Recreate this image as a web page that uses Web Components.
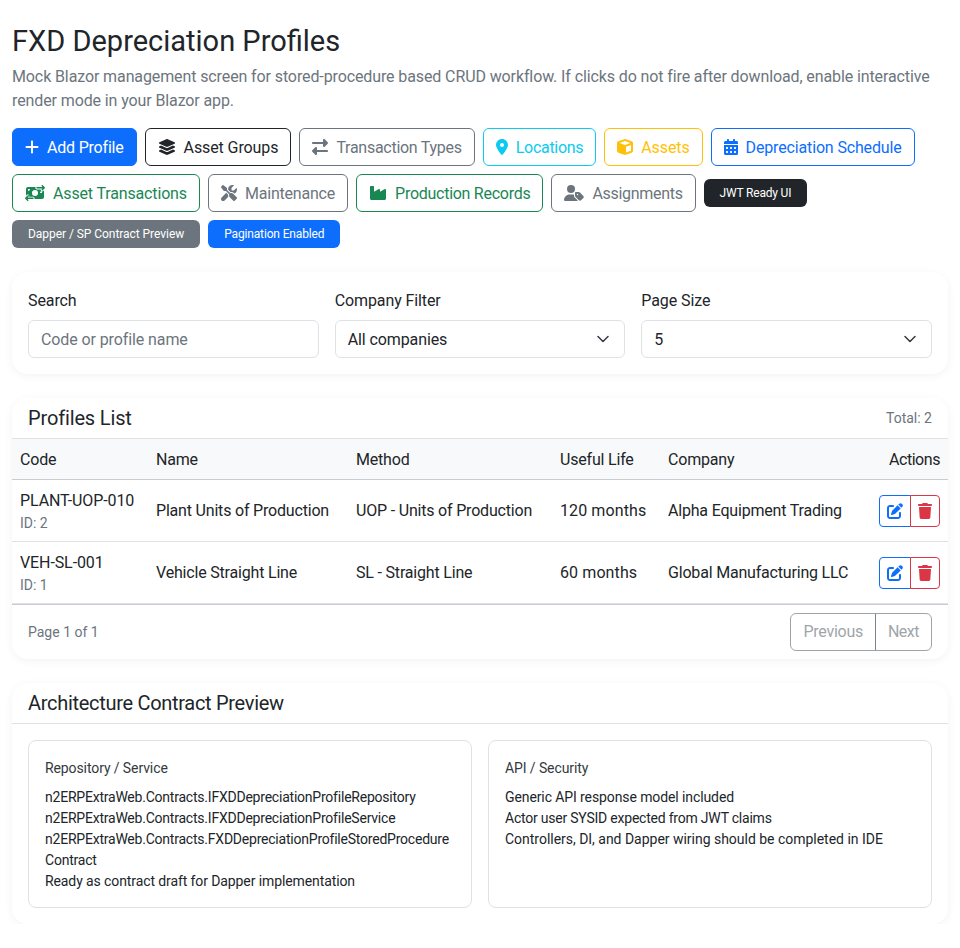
<!DOCTYPE html>
<html><head><meta charset="utf-8"><style>
html,body{margin:0;padding:0;background:#fff}
body{font:16px/24px Roboto,"Liberation Sans",sans-serif;letter-spacing:-.1px;color:#212529}
</style></head><body>
<fxd-app></fxd-app>
<script>
const I={
plus:['0 0 448 512','M256 80c0-17.7-14.3-32-32-32s-32 14.3-32 32V224H48c-17.7 0-32 14.3-32 32s14.3 32 32 32H192V432c0 17.7 14.3 32 32 32s32-14.3 32-32V288H400c17.7 0 32-14.3 32-32s-14.3-32-32-32H256V80z'],
layers:['0 0 576 512','M264.5 5.2c14.9-6.9 32.1-6.9 47 0l218.6 101c8.5 3.9 13.9 12.4 13.9 21.8s-5.4 17.9-13.9 21.8l-218.6 101c-14.9 6.9-32.1 6.9-47 0L45.9 149.8C37.4 145.8 32 137.3 32 128s5.4-17.9 13.9-21.8L264.5 5.2zM476.9 209.6l53.2 24.6c8.5 3.9 13.9 12.4 13.9 21.8s-5.4 17.9-13.9 21.8l-218.6 101c-14.9 6.9-32.1 6.9-47 0L45.9 277.8C37.4 273.8 32 265.3 32 256s5.4-17.9 13.9-21.8l53.2-24.6 152 70.2c23.4 10.8 50.4 10.8 73.8 0l152-70.2zm-152 198.2l152-70.2 53.2 24.6c8.5 3.9 13.9 12.4 13.9 21.8s-5.4 17.9-13.9 21.8l-218.6 101c-14.9 6.9-32.1 6.9-47 0L45.9 405.8C37.4 401.8 32 393.3 32 384s5.4-17.9 13.9-21.8l53.2-24.6 152 70.2c23.4 10.8 50.4 10.8 73.8 0z'],
swap:['0 0 512 512','M32 96l320 0V32c0-12.9 7.8-24.6 19.8-29.6s25.7-2.2 34.9 6.9l96 96c6 6 9.4 14.1 9.4 22.6s-3.4 16.6-9.4 22.6l-96 96c-9.2 9.2-22.9 11.9-34.9 6.9s-19.8-16.6-19.8-29.6V160L32 160c-17.7 0-32-14.3-32-32s14.3-32 32-32zM480 352c17.7 0 32 14.3 32 32s-14.3 32-32 32H160v64c0 12.9-7.8 24.6-19.8 29.6s-25.7 2.2-34.9-6.9l-96-96c-6-6-9.4-14.1-9.4-22.6s3.4-16.6 9.4-22.6l96-96c9.2-9.2 22.9-11.9 34.9-6.9s19.8 16.6 19.8 29.6l0 64H480z'],
pin:['0 0 384 512','M215.7 499.2C267 435 384 279.4 384 192C384 86 298 0 192 0S0 86 0 192c0 87.4 117 243 168.3 307.2c12.3 15.3 35.1 15.3 47.4 0zM192 128a64 64 0 1 1 0 128 64 64 0 1 1 0-128z'],
cube:['0 0 512 512','M234.5 5.7c13.9-5 29.1-5 43.1 0l192 68.6C495 83.4 512 107.5 512 134.6V377.4c0 27-17 51.2-42.5 60.3l-192 68.6c-13.9 5-29.1 5-43.1 0l-192-68.6C17 428.6 0 404.5 0 377.4V134.6c0-27 17-51.2 42.5-60.3l192-68.6zM256 66L82.3 128 256 190l173.7-62L256 66zm32 368.6l160-57.1v-188L288 246.6v188z'],
cal:['0 0 448 512','M128 0c17.7 0 32 14.3 32 32V64H288V32c0-17.7 14.3-32 32-32s32 14.3 32 32V64h48c26.5 0 48 21.5 48 48v48H0V112C0 85.5 21.5 64 48 64H96V32c0-17.7 14.3-32 32-32zM0 192H448V464c0 26.5-21.5 48-48 48H48c-26.5 0-48-21.5-48-48V192zm64 80v32c0 8.8 7.2 16 16 16h32c8.8 0 16-7.2 16-16V272c0-8.8-7.2-16-16-16H80c-8.8 0-16 7.2-16 16zm128 0v32c0 8.8 7.2 16 16 16h32c8.8 0 16-7.2 16-16V272c0-8.8-7.2-16-16-16H208c-8.8 0-16 7.2-16 16zm144-16c-8.8 0-16 7.2-16 16v32c0 8.8 7.2 16 16 16h32c8.8 0 16-7.2 16-16V272c0-8.8-7.2-16-16-16H336zM64 400v32c0 8.8 7.2 16 16 16h32c8.8 0 16-7.2 16-16V400c0-8.8-7.2-16-16-16H80c-8.8 0-16 7.2-16 16zm144-16c-8.8 0-16 7.2-16 16v32c0 8.8 7.2 16 16 16h32c8.8 0 16-7.2 16-16V400c0-8.8-7.2-16-16-16H208zm112 16v32c0 8.8 7.2 16 16 16h32c8.8 0 16-7.2 16-16V400c0-8.8-7.2-16-16-16H336c-8.8 0-16 7.2-16 16z'],
money:['0 0 640 512','M535 41c-9.4-9.4-9.4-24.6 0-33.9s24.6-9.4 33.9 0l64 64c4.5 4.5 7 10.6 7 17s-2.5 12.5-7 17l-64 64c-9.4 9.4-24.6 9.4-33.9 0s-9.4-24.6 0-33.9l23-23L384 112c-13.3 0-24-10.7-24-24s10.7-24 24-24l174.1 0L535 41zM105 377l-23 23L256 400c13.3 0 24 10.7 24 24s-10.7 24-24 24L81.9 448l23 23c9.4 9.4 9.4 24.6 0 33.9s-24.6 9.4-33.9 0L7 441c-4.5-4.5-7-10.6-7-17s2.5-12.5 7-17l64-64c9.4-9.4 24.6-9.4 33.9 0s9.4 24.6 0 33.9zM96 64H337.9c-3.7 7.2-5.9 15.3-5.9 24c0 28.7 23.3 52 52 52l117.4 0c-4 17 .6 35.5 13.8 48.8c20.3 20.3 53.2 20.3 73.5 0L608 169.5V384c0 35.3-28.7 64-64 64H302.1c3.7-7.2 5.9-15.3 5.9-24c0-28.7-23.3-52-52-52l-117.4 0c4-17-.6-35.5-13.8-48.8c-20.3-20.3-53.2-20.3-73.5 0L32 342.5V128c0-35.3 28.7-64 64-64zm64 64H96v64c35.3 0 64-28.7 64-64zM96 320v64h64c0-35.3-28.7-64-64-64zM544 192c-35.3 0-64 28.7-64 64h64V192zM320 352a96 96 0 1 0 0-192 96 96 0 1 0 0 192z'],
tools:['0 0 512 512','M78.6 5C69.1-2.4 55.6-1.5 47 7L7 47c-8.5 8.5-9.4 22-2.1 31.6l80 104c4.5 5.9 11.6 9.4 19 9.4h54.1l109 109c-14.7 29-10 65.4 14.3 89.6l112 112c12.5 12.5 32.8 12.5 45.3 0l64-64c12.5-12.5 12.5-32.8 0-45.3l-112-112c-24.2-24.2-60.6-29-89.6-14.3l-109-109V104c0-7.5-3.5-14.5-9.4-19L78.6 5zM19.9 396.1C7.2 408.8 0 426.1 0 444.1C0 481.6 30.4 512 67.9 512c18 0 35.3-7.2 48-19.9L233.7 374.3c-7.8-20.9-9-43.6-3.6-65.1l-61.7-61.7L19.9 396.1zM512 144c0-10.5-1.1-20.7-3.2-30.5c-2.4-11.2-16.1-14.1-24.2-6l-63.9 63.9c-3 3-7.1 4.7-11.3 4.7H352c-8.8 0-16-7.2-16-16V102.6c0-4.2 1.7-8.3 4.7-11.3l63.9-63.9c8.1-8.1 5.2-21.8-6-24.2C388.7 1.1 378.5 0 368 0C288.5 0 224 64.5 224 144l0 .8 85.3 85.3c36-9.1 75.8 .5 104 28.7L429 274.5c49-23 83-72.8 83-130.5z'],
factory:['0 0 576 512','M64 32C46.3 32 32 46.3 32 64V304v48 80c0 26.5 21.5 48 48 48H496c26.5 0 48-21.5 48-48V304 152.2c0-18.2-19.4-29.7-35.4-21.1L352 215.4V152.2c0-18.2-19.4-29.7-35.4-21.1L160 215.4V64c0-17.7-14.3-32-32-32H64z'],
usertag:['0 0 640 512','M224 256A128 128 0 1 0 224 0a128 128 0 1 0 0 256zm-45.7 48C79.8 304 0 383.8 0 482.3C0 498.7 13.3 512 29.7 512H418.3c10 0 18.8-4.9 24.2-12.5l-99.2-99.2c-14.9-14.9-23.3-35.1-23.3-56.1v-33c-15.9-4.7-32.8-7.2-50.3-7.2H178.3zM384 224c-17.7 0-32 14.3-32 32v82.7c0 17 6.7 33.3 18.7 45.3L478 491.3c18.7 18.7 49.1 18.7 67.9 0l73.4-73.4c18.7-18.7 18.7-49.1 0-67.9L512 242.7c-12-12-28.3-18.7-45.3-18.7H384zm24 80a24 24 0 1 1 48 0 24 24 0 1 1 -48 0z'],
edit:['0 0 512 512','M471.6 21.7c-21.9-21.9-57.3-21.9-79.2 0L362.3 51.7l97.9 97.9 30.1-30.1c21.9-21.9 21.9-57.3 0-79.2L471.6 21.7zm-299.2 220c-6.1 6.1-10.8 13.6-13.5 21.9l-29.6 88.8c-2.9 8.6-.6 18.1 5.8 24.6s15.9 8.7 24.6 5.8l88.8-29.6c8.2-2.7 15.7-7.4 21.9-13.5L437.7 172.3 339.7 74.3 172.4 241.7zM96 64C43 64 0 107 0 160V416c0 53 43 96 96 96H352c53 0 96-43 96-96V320c0-17.7-14.3-32-32-32s-32 14.3-32 32v96c0 17.7-14.3 32-32 32H96c-17.7 0-32-14.3-32-32V160c0-17.7 14.3-32 32-32h96c17.7 0 32-14.3 32-32s-14.3-32-32-32H96z'],
trash:['0 0 448 512','M135.2 17.7L128 32H32C14.3 32 0 46.3 0 64S14.3 96 32 96H416c17.7 0 32-14.3 32-32s-14.3-32-32-32H320l-7.2-14.3C307.4 6.8 296.3 0 284.2 0H163.8c-12.1 0-23.2 6.8-28.6 17.7zM416 128H32L53.2 467c1.6 25.3 22.6 45 47.9 45H346.9c25.3 0 46.3-19.7 47.9-45L416 128z']
};
class FxdIcon extends HTMLElement{connectedCallback(){
 const[v,d]=I[this.getAttribute('name')];const[,,w,h]=v.split(' ').map(Number);
 this.attachShadow({mode:'open'}).innerHTML=`<style>:host{display:inline-flex;align-items:center}svg{height:16px;width:${16*w/h}px;display:block;fill:currentColor}</style><svg viewBox="${v}" aria-hidden="true"><path d="${d}"/></svg>`;
}}
const C={primary:'13,110,253',dark:'33,37,41',secondary:'108,117,125',info:'13,202,240',warning:'255,193,7',success:'25,135,84',danger:'220,53,69'};
class FxdBtn extends HTMLElement{connectedCallback(){
 const c=`rgb(${C[this.getAttribute('color')]})`,fill=this.hasAttribute('fill'),ic=this.getAttribute('icon');
 this.attachShadow({mode:'open'}).innerHTML=`<style>:host{display:inline-flex;align-items:center;gap:8px;height:38px;box-sizing:border-box;padding:0 12px;border:1px solid ${c};border-radius:6px;color:${fill?'#fff':c};background:${fill?c:'#fff'};white-space:nowrap;letter-spacing:${this.getAttribute('ls')||-.1}px}
 span{margin-top:2px}</style>${ic?`<fxd-icon name="${ic}"></fxd-icon>`:''}<span><slot></slot></span>`;
}}
class FxdBadge extends HTMLElement{connectedCallback(){
 this.attachShadow({mode:'open'}).innerHTML=`<style>:host{display:inline-flex;align-items:center;height:28px;box-sizing:border-box;padding:0 16px;border-radius:6px;font-size:12px;line-height:12px;letter-spacing:${this.getAttribute('ls')||-.05}px;color:#fff;background:rgb(${C[this.getAttribute('color')]});white-space:nowrap}</style><slot></slot>`;
}}
class FxdCard extends HTMLElement{connectedCallback(){
 this.attachShadow({mode:'open'}).innerHTML=`<style>:host{display:block;background:#fff;border-radius:16px;box-shadow:0 2px 10px rgba(0,0,0,.05)}</style><slot></slot>`;
}}
class FxdField extends HTMLElement{connectedCallback(){
 const sel=this.hasAttribute('select');
 this.attachShadow({mode:'open'}).innerHTML=`<style>:host{display:block;flex:1 1 0;min-width:0}
 label{display:block;padding-top:1px;margin-bottom:7px}
 .c{height:38px;box-sizing:border-box;border:1px solid #dee2e6;border-radius:6px;padding:2px 12px 0;display:flex;align-items:center;justify-content:space-between;color:${sel?'#212529':'#6c757d'};background:#fff}
 svg{width:12px;height:8px;margin:-2px 3px 0 0;flex:none}</style>
 <label>${this.getAttribute('label')}</label><div class="c"><span>${this.getAttribute('value')}</span>${sel?'<svg viewBox="0 0 12 8"><path fill="none" stroke="#343a40" stroke-linecap="round" stroke-linejoin="round" stroke-width="1.5" d="M1 1.5l5 5 5-5"/></svg>':''}</div>`;
}}
class FxdProfiles extends HTMLElement{connectedCallback(){
 const rows=[['PLANT-UOP-010','ID: 2','Plant Units of Production','UOP - Units of Production','120 months','Alpha Equipment Trading'],['VEH-SL-001','ID: 1','Vehicle Straight Line','SL - Straight Line','60 months','Global Manufacturing LLC']];
 this.attachShadow({mode:'open'}).innerHTML=`<style>:host{display:block}
 .h{display:flex;justify-content:space-between;align-items:center;height:40px;padding:0 16px}
 .t{font-size:20px;line-height:24px;letter-spacing:-.15px}
 .s{font-size:14px;color:#6c757d;letter-spacing:0}
 .grid{display:grid;grid-template-columns:136px 200px 204px 108px 1fr 85px;letter-spacing:-.19px}
 .grid>div{padding:0 8px;display:flex;flex-direction:column;justify-content:center;border-bottom:1px solid #dee2e6;min-width:0;white-space:nowrap}
 .grid>.th{height:42px;box-sizing:border-box;background:#f8f9fa;border-top:1px solid #dee2e6;border-bottom:1px solid #c9cdd1;padding-top:2px}
 .grid>.td{height:62px;box-sizing:border-box}
 .grid>.first{padding-top:2px;letter-spacing:-.1px}
 .sm{font-size:14px;line-height:21px;color:#6c757d;letter-spacing:0}
 .m{letter-spacing:.1px}
 .grid>.r{align-items:flex-end;letter-spacing:-.45px}
 .grid>.acts{flex-direction:row;align-items:center;justify-content:flex-end}
 .ab{height:32px;box-sizing:border-box;border:1px solid;display:flex;align-items:center;justify-content:center;background:#fff}
 .e{width:32px;color:#0d6efd;border-color:#0d6efd;border-radius:4px 0 0 4px}
 .d{width:30px;color:#dc3545;border-color:#dc3545;border-radius:0 4px 4px 0;margin-left:-1px}
 .f{display:flex;justify-content:space-between;align-items:center;padding:8px 16px;border-top:1px solid #c9cdd1}
 .pg{display:flex}
 .pg div{height:38px;box-sizing:border-box;padding:0 12px;border:1px solid #6c757d;display:flex;align-items:center;color:#6c757d;opacity:.65;letter-spacing:-.27px}
 .pg div:first-child{border-radius:6px 0 0 6px}.pg div:last-child{border-radius:0 6px 6px 0;margin-left:-1px;letter-spacing:-.5px}
 </style>
 <div class="h"><div class="t">Profiles List</div><div class="s">Total: 2</div></div>
 <div class="grid">
 ${['Code','Name','Method','Useful Life','Company'].map(x=>`<div class="th">${x}</div>`).join('')}<div class="th r">Actions</div>
 ${rows.map(r=>`<div class="td first"><div>${r[0]}</div><div class="sm">${r[1]}</div></div>${r.slice(2).map(x=>`<div class="td${/months/.test(x)?' m':''}">${x}</div>`).join('')}<div class="td acts"><span class="ab e"><fxd-icon name="edit"></fxd-icon></span><span class="ab d"><fxd-icon name="trash"></fxd-icon></span></div>`).join('')}
 </div>
 <div class="f"><div class="s">Page 1 of 1</div><div class="pg"><div>Previous</div><div>Next</div></div></div>`;
}}
class FxdNote extends HTMLElement{connectedCallback(){
 this.attachShadow({mode:'open'}).innerHTML=`<style>:host{display:block;flex:1 1 0;min-width:0;border:1px solid #dee2e6;border-radius:8px;padding:17px 16px 15px;font-size:14px;line-height:21px}
 .t{margin-bottom:8px;color:#343a40}</style><div class="t">${this.getAttribute('title')}</div><slot></slot>`;
}}
class FxdApp extends HTMLElement{connectedCallback(){
 this.attachShadow({mode:'open'}).innerHTML=`<style>:host{display:block;padding:24px 12px 0}
 h1{font-size:29px;line-height:34px;font-weight:400;letter-spacing:0;margin:0 0 7px}
 p{margin:0 0 15px;color:#6c757d;letter-spacing:-.11px}
 .btns{display:flex;flex-wrap:wrap;align-items:center;gap:8px;margin-bottom:24px}
 .flt{display:flex;gap:16px;padding:16px;margin-bottom:24px}
 .list{margin-bottom:24px}
 .arch-h{font-size:20px;line-height:24px;padding:8px 16px;border-bottom:1px solid #dee2e6;letter-spacing:-.3px}
 .arch-b{display:flex;gap:16px;padding:16px}
 .q{letter-spacing:-.22px}
 </style>
 <h1>FXD Depreciation Profiles</h1>
 <p>Mock Blazor management screen for stored-procedure based CRUD workflow. If clicks do not fire after download, enable interactive render mode in your Blazor app.</p>
 <div class="btns">
 <fxd-btn color="primary" fill icon="plus" ls="-.2">Add Profile</fxd-btn>
 <fxd-btn color="dark" icon="layers" ls="-.1">Asset Groups</fxd-btn>
 <fxd-btn color="secondary" icon="swap" ls="-.27">Transaction Types</fxd-btn>
 <fxd-btn color="info" icon="pin" ls="-.3">Locations</fxd-btn>
 <fxd-btn color="warning" icon="cube" ls="-.1">Assets</fxd-btn>
 <fxd-btn color="primary" icon="cal" ls="-.15">Depreciation Schedule</fxd-btn>
 <fxd-btn color="success" icon="money" ls="-.15">Asset Transactions</fxd-btn>
 <fxd-btn color="secondary" icon="tools" ls="-.2">Maintenance</fxd-btn>
 <fxd-btn color="success" icon="factory" ls="-.27">Production Records</fxd-btn>
 <fxd-btn color="secondary" icon="usertag" ls="-.3">Assignments</fxd-btn>
 <fxd-badge color="dark" ls="-.2">JWT Ready UI</fxd-badge>
 <fxd-badge color="secondary">Dapper / SP Contract Preview</fxd-badge>
 <fxd-badge color="primary" ls="-.15">Pagination Enabled</fxd-badge>
 </div>
 <fxd-card class="flt">
 <fxd-field label="Search" value="Code or profile name"></fxd-field>
 <fxd-field select label="Company Filter" value="All companies"></fxd-field>
 <fxd-field select label="Page Size" value="5"></fxd-field>
 </fxd-card>
 <fxd-card class="list"><fxd-profiles></fxd-profiles></fxd-card>
 <fxd-card>
 <div class="arch-h">Architecture Contract Preview</div>
 <div class="arch-b">
 <fxd-note title="Repository / Service"><span class="q">n2ERPExtraWeb.Contracts.IFXDDepreciationProfileRepository<br>n2ERPExtraWeb.Contracts.IFXDDepreciationProfileService<br>n2ERPExtraWeb.Contracts.FXDDepreciationProfileStoredProcedure<wbr>Contract</span><br>Ready as contract draft for Dapper implementation</fxd-note>
 <fxd-note title="API / Security">Generic API response model included<br><span class="q">Actor user SYSID expected from JWT claims</span><br><span style="letter-spacing:-.02px">Controllers, DI, and Dapper wiring should be completed in IDE</span></fxd-note>
 </div>
 </fxd-card>`;
}}
[['fxd-icon',FxdIcon],['fxd-btn',FxdBtn],['fxd-badge',FxdBadge],['fxd-card',FxdCard],['fxd-field',FxdField],['fxd-profiles',FxdProfiles],['fxd-note',FxdNote],['fxd-app',FxdApp]].forEach(([n,c])=>customElements.define(n,c));
</script>
</body></html>
